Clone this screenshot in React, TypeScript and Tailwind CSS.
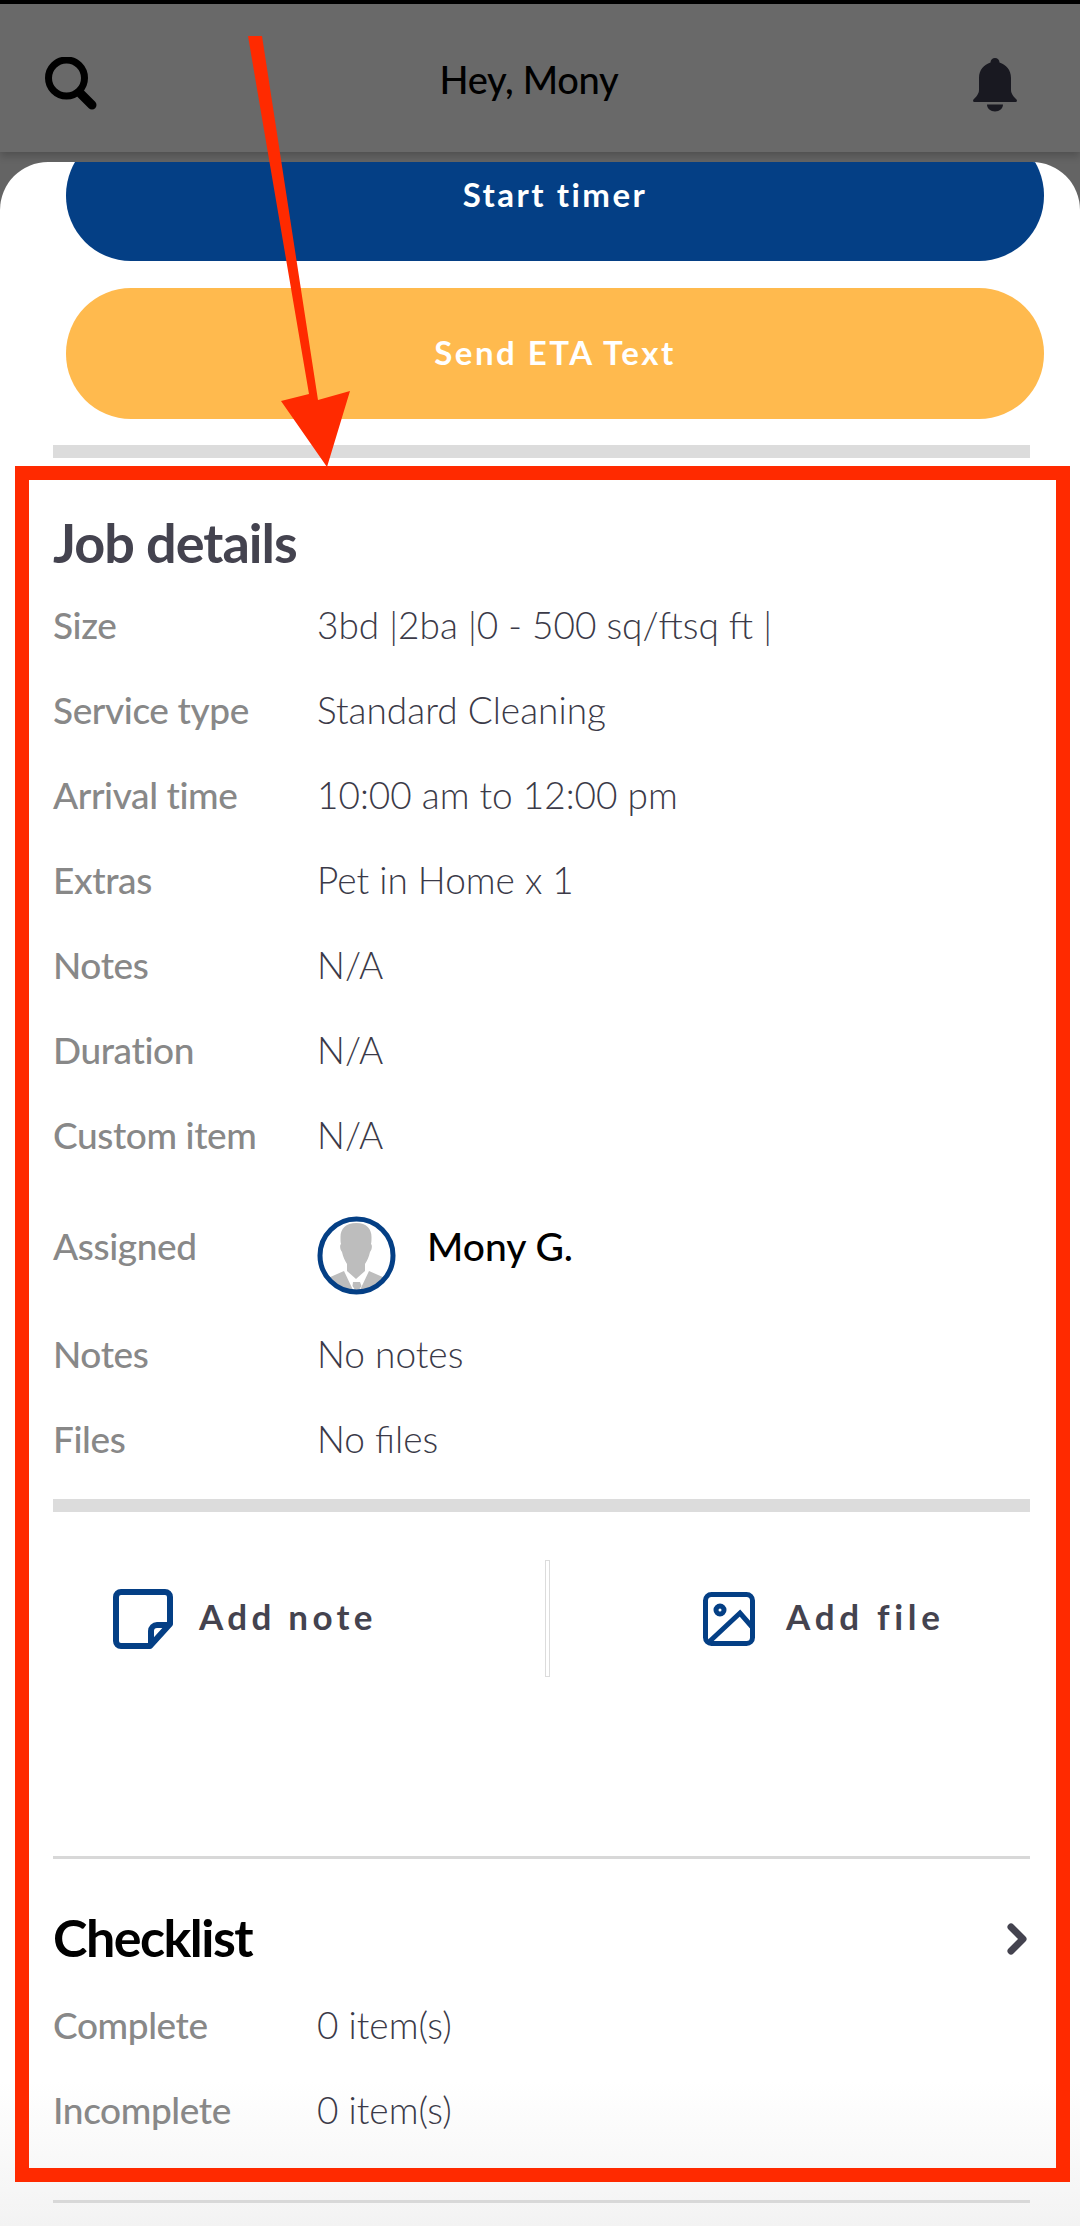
const DETAILS = [
  { label: "Size", value: "3bd |2ba |0 - 500 sq/ftsq ft |" },
  { label: "Service type", value: "Standard Cleaning" },
  { label: "Arrival time", value: "10:00 am to 12:00 pm" },
  { label: "Extras", value: "Pet in Home x 1" },
  { label: "Notes", value: "N/A" },
  { label: "Duration", value: "N/A" },
  { label: "Custom item", value: "N/A" },
];

function Row({ label, value }: { label: string; value: string }) {
  return (
    <div className="flex h-[85px] items-center pb-[3px] text-[37px]">
      <div className="w-[264px] shrink-0 font-medium tracking-[-0.4px] text-[#888888]">{label}</div>
      <div className="font-light text-[#3b3a48]">{value}</div>
    </div>
  );
}

function SearchIcon() {
  return (
    <svg className="mt-[11px]" width="52" height="53" viewBox="0 0 52 53" fill="none" stroke="#000">
      <circle cx="21.500" cy="21" r="18" strokeWidth="7" />
      <path d="M36 37l11 11" strokeWidth="9" strokeLinecap="round" />
    </svg>
  );
}

function BellIcon() {
  return (
    <svg className="mt-[14px]" width="44" height="54" viewBox="0 0 44 54" fill="#191921">
      <path d="M22 0a4.500 4.500 0 0 1 4.500 4.500C33 6.500 38 12 38 20v12c0 4 3 7 5.500 9.500c1 1.500 0 2.500-1 2.500H1.500c-1 0-2-1-1-2.500C3 39 6 36 6 32V20C6 12 11 6.500 17.500 4.500A4.500 4.500 0 0 1 22 0z" />
      <path d="M14 46.500h16c0 4-3.500 7-8 7s-8-3-8-7z" />
    </svg>
  );
}

function Avatar() {
  return (
    <svg className="mt-[18px]" width="79" height="79" viewBox="0 0 79 79">
      <defs>
        <clipPath id="ring">
          <circle cx="39.500" cy="39.500" r="36" />
        </clipPath>
      </defs>
      <circle cx="39.500" cy="39.500" r="36.500" fill="#fff" />
      <g clipPath="url(#ring)" fill="#bdbdbd">
        <path d="M39.500 7c10 0 15 6 15 14c0 3 0 5-.5 7c1.500 1 1 6-1 8c-1 5-3 9-5 12v7l-9 8l-9-8v-7c-2-3-4-7-5-12c-2-2-2.500-7-1-8c-.5-2-.5-4-.5-7c0-8 5-14 16-14z" />
        <path d="M11 62l16-7l9 19l-2 6H10zM68 62l-16-7l-9 19l2 6h24z" />
        <path d="M36 66h7l1.500 4l-2 3l2 7h-9l2-7l-2-3z" />
      </g>
      <circle cx="39.500" cy="39.500" r="36.500" fill="none" stroke="#043f85" strokeWidth="5" />
    </svg>
  );
}

function NoteIcon() {
  return (
    <svg width="60" height="60" viewBox="0 0 60 60" fill="none" stroke="#043f85" strokeWidth="6" strokeLinejoin="round">
      <path d="M8 3h44a5 5 0 0 1 5 5v27L37 57H8a5 5 0 0 1-5-5V8a5 5 0 0 1 5-5z" />
      <path d="M38 57V42a6 6 0 0 1 6-6h13" />
    </svg>
  );
}

function ImageIcon() {
  return (
    <svg width="52" height="54" viewBox="0 0 52 54" fill="none" stroke="#043f85" strokeWidth="5">
      <rect x="2.500" y="2.500" width="47" height="49" rx="6" />
      <circle cx="17" cy="18" r="4" />
      <path d="M6 50l31-29l13 15" />
    </svg>
  );
}

function ChevronIcon() {
  return (
    <svg className="mr-[2px] mt-[3px]" width="22" height="32" viewBox="0 0 22 32" fill="none" stroke="#44434f" strokeWidth="7" strokeLinecap="round" strokeLinejoin="round">
      <path d="M5 4l12 12L5 28" />
    </svg>
  );
}

export default function App() {
  return (
    <div className="relative h-[2226px] w-[1080px] overflow-hidden bg-[#646464] font-['Lato',sans-serif]">
      <div className="h-[4px] bg-black" />
      <header className="flex h-[148px] items-center justify-between bg-[#696969] pl-[45px] pr-[63px] shadow-[0_4px_8px_rgba(0,0,0,0.2)]">
        <SearchIcon />
        <h1 className="-ml-[12px] mt-[2px] text-[38px] font-medium tracking-[-0.3px] text-black">Hey, Mony</h1>
        <BellIcon />
      </header>

      <main className="mt-[10px] h-[2064px] overflow-hidden rounded-t-[48px] bg-gradient-to-b from-white from-[93%] to-[#f3f3f3] pl-[53px] pr-[50px]">
        <button className="-mt-[32px] ml-[13px] flex h-[131px] w-[978px] items-center justify-center rounded-[65px] bg-[#043f85] pb-[2px] text-[33px] font-bold tracking-[2.500px] text-white">
          Start timer
        </button>
        <button className="ml-[13px] mt-[27px] flex h-[131px] w-[978px] items-center justify-center rounded-[65px] bg-[#ffba4e] pb-[2px] text-[33px] font-bold tracking-[2.500px] text-white">
          Send ETA Text
        </button>
        <div className="mt-[26px] h-[13px] bg-[#dcdcdc]" />

        <h2 className="mt-[53px] text-[54px] font-bold leading-[64px] tracking-[-1px] text-[#44434f]">Job details</h2>
        <div className="mt-[9px]">
          {DETAILS.map((d, i) => (
            <Row key={i} label={d.label} value={d.value} />
          ))}
        </div>
        <div className="flex h-[134px] items-center text-[37px]">
          <div className="w-[264px] shrink-0 font-medium tracking-[-0.4px] text-[#888888]">Assigned</div>
          <Avatar />
          <div className="ml-[31px] text-[39px] font-medium text-black">Mony G.</div>
        </div>
        <Row label="Notes" value="No notes" />
        <Row label="Files" value="No files" />
        <div className="mt-[16px] h-[13px] bg-[#dcdcdc]" />

        <div className="mt-[48px] flex h-[117px] items-center">
          <div className="flex w-[492px] items-center pl-[60px]">
            <NoteIcon />
            <span className="-mt-[4px] ml-[26px] text-[35px] font-bold tracking-[4.300px] text-[#44434f]">Add note</span>
          </div>
          <div className="h-full w-[5px] border border-[#dcdcdc]" />
          <div className="flex items-center pl-[153px]">
            <ImageIcon />
            <span className="-mt-[4px] ml-[31px] text-[35px] font-bold tracking-[4.700px] text-[#44434f]">Add file</span>
          </div>
        </div>

        <div className="mt-[179px] h-[3px] bg-[#d8d8d8]" />
        <div className="mt-[46px] flex h-[64px] items-center justify-between">
          <h2 className="text-[52px] font-bold tracking-[-1.500px] text-black">Checklist</h2>
          <ChevronIcon />
        </div>
        <div className="mt-[15px]">
          <Row label="Complete" value="0 item(s)" />
          <Row label="Incomplete" value="0 item(s)" />
        </div>
        <div className="mt-[46px] h-[3px] bg-[#d8d8d8]" />
      </main>

      {/* annotation drawn over the screenshot */}
      <div className="absolute left-[15px] top-[466px] h-[1716px] w-[1055px] border-[14px] border-[#ff2a00]" />
      <svg className="absolute left-0 top-0" width="1080" height="480" viewBox="0 0 1080 480">
        <path d="M248 36h14l56 364l32-9l-23 76l-46-66l28-7z" fill="#ff2a00" />
      </svg>
    </div>
  );
}
